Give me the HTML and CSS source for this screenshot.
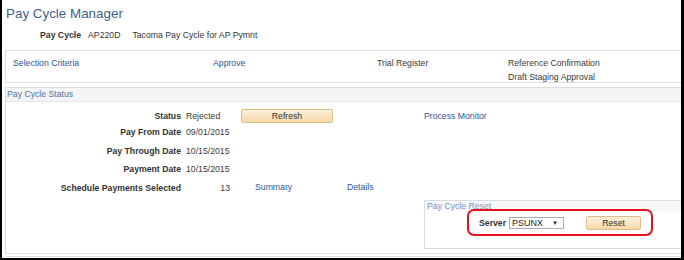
FILE: index.html
```html
<!DOCTYPE html>
<html lang="en">
<head>
    <meta charset="UTF-8">
    <meta name="viewport" content="width=device-width, initial-scale=1.0">
    <title>Pay Cycle Manager</title>
    <link rel="stylesheet" href="styles.css">
</head>
<body>
    <div class="frame">
        <h1 class="page-title">Pay Cycle Manager</h1>

        <div class="cycle-line">
            <span class="label">Pay Cycle</span>
            <span class="cycle-id">AP220D</span>
            <span class="cycle-desc">Tacoma Pay Cycle for AP Pymnt</span>
        </div>

        <div class="actions">
            <div><a href="#">Selection Criteria</a></div>
            <div><a href="#">Approve</a></div>
            <div class="plain">Trial Register</div>
            <div class="plain stack">
                <span>Reference Confirmation</span>
                <span>Draft Staging Approval</span>
            </div>
        </div>

        <div class="panel">
            <div class="panel-head">Pay Cycle Status</div>
            <div class="panel-body">
                <div class="status-grid">
                    <div class="label right">Status</div>
                    <div class="value">Rejected</div>
                    <div><button class="ps-btn refresh">Refresh</button></div>
                    <div class="monitor"><a href="#">Process Monitor</a></div>

                    <div class="label right">Pay From Date</div>
                    <div class="value">09/01/2015</div>
                    <div></div><div></div>

                    <div class="label right">Pay Through Date</div>
                    <div class="value">10/15/2015</div>
                    <div></div><div></div>

                    <div class="label right">Payment Date</div>
                    <div class="value">10/15/2015</div>
                    <div></div><div></div>

                    <div class="label right">Schedule Payments Selected</div>
                    <div class="value count">13</div>
                    <div class="sched-link"><a href="#">Summary</a></div>
                    <div class="sched-link"><a href="#">Details</a></div>
                </div>

                <div class="reset-box">
                    <div class="reset-head">Pay Cycle Reset</div>
                    <div class="highlight">
                        <span class="label">Server</span>
                        <div class="select">
                            <span>PSUNX</span>
                            <span class="arrow">&#9660;</span>
                        </div>
                        <button class="ps-btn reset">Reset</button>
                    </div>
                </div>
            </div>
        </div>
        <div class="rule"></div>
    </div>
</body>
</html>
```

FILE: styles.css
```css
body {
    margin: 0;
    font-family: "Liberation Sans", Arial, sans-serif;
    font-size: 8.7px;
    color: #333333;
    background-color: #ffffff;
}

.frame {
    width: 684px;
    height: 260px;
    box-sizing: border-box;
    border-left: 2px solid #000000;
    border-right: 3px solid #000000;
    border-bottom: 2px solid #000000;
    padding: 6px 0 0 3px;
    overflow: hidden;
}

a {
    color: #2f5494;
    text-decoration: none;
}

.page-title {
    margin: 0 0 0 1px;
    font-size: 13.4px;
    font-weight: normal;
    line-height: 16px;
    color: #3e5f8c;
}

.cycle-line {
    display: flex;
    margin: 7px 0 0 35px;
    line-height: 12px;
}

.label {
    font-weight: bold;
    color: #333333;
}

.cycle-id {
    margin-left: 7px;
}

.cycle-desc {
    margin-left: 12px;
}

.actions {
    display: grid;
    grid-template-columns: 200px 164px 131px auto;
    margin: 9px -6px 0 0;
    height: 25px;
    padding: 6px 0 0 7px;
    border: 1px solid #dcdee2;
    line-height: 13px;
}

.plain {
    color: #3a3a3a;
}

.stack {
    display: flex;
    flex-direction: column;
    line-height: 13.5px;
}

.panel {
    margin: 4px -6px 0 0;
}

.panel-head {
    height: 13px;
    line-height: 13px;
    padding-left: 1px;
    border: 1px solid #d9dce1;
    border-bottom-color: #e3e5e8;
    background-color: #f4f5f7;
    color: #56739c;
}

.panel-body {
    border-left: 1px solid #d9dce1;
    border-bottom: 1px solid #d9dce1;
    padding: 5px 0 4px 0;
}

.status-grid {
    display: grid;
    grid-template-columns: 175px 60px 92px auto;
    grid-template-rows: 18px 14px 23px 14px 24px;
    align-items: center;
    line-height: 12px;
}

.right {
    text-align: right;
}

.value {
    padding-left: 5px;
    color: #3a3a3a;
}

.count {
    text-align: right;
    padding-right: 11px;
}

.monitor {
    padding-left: 91px;
}

.sched-link {
    align-self: start;
    padding: 5px 0 0 14px;
}

.ps-btn {
    display: block;
    height: 14px;
    padding: 0;
    font-family: "Liberation Sans", Arial, sans-serif;
    font-size: 8.7px;
    color: #333333;
    border: 1px solid #e0bd86;
    border-radius: 2px;
    background: linear-gradient(#fdf1dc, #f7d9a8);
}

.refresh {
    width: 92px;
}

.reset-box {
    margin-left: 418px;
    height: 47px;
    border: 1px solid #d9dce1;
    border-right: none;
}

.reset-head {
    height: 10px;
    line-height: 10px;
    padding-left: 2px;
    background-color: #f7f8f9;
    color: #7d93b4;
}

.highlight {
    display: flex;
    align-items: center;
    width: 172px;
    height: 23px;
    margin: -2px 0 0 42px;
    padding-left: 10px;
    border: 2px solid #e8101a;
    border-radius: 7px;
}

.select {
    display: flex;
    justify-content: space-between;
    align-items: center;
    box-sizing: border-box;
    width: 55px;
    height: 12px;
    margin-left: 3px;
    padding: 0 5px 0 2px;
    border: 1px solid #a9abb0;
    background-color: #ffffff;
    font-size: 9px;
    color: #222222;
}

.arrow {
    font-size: 6px;
}

.reset {
    width: 55px;
    margin-left: 22px;
}

.rule {
    margin: 2px -6px 0 0;
    border-top: 1px solid #dcdee2;
}
```
